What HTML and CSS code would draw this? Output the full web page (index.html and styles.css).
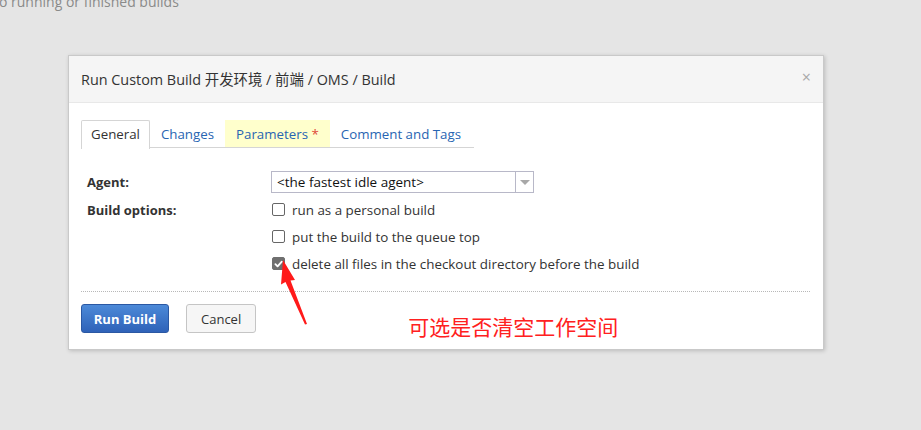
FILE: index.html
```html
<!DOCTYPE html>
<html>
<head>
<meta charset="utf-8">
<link rel="stylesheet" href="styles.css">
</head>
<body>
<div class="page">
  <div class="bgtext">o running or finished builds</div>
  <div class="dialog">
    <div class="dlg-head">
      <span class="dlg-title">Run Custom Build 开发环境 / 前端 / OMS / Build</span>
      <span class="close">×</span>
    </div>
    <div class="dlg-body">
      <div class="tabs">
        <div class="tab active">General</div>
        <div class="tab">Changes</div>
        <div class="tab params">Parameters <span class="star">*</span></div>
        <div class="tab">Comment and Tags</div>
      </div>
      <div class="form">
        <div class="label">Agent:</div>
        <div class="field">
          <div class="select"><span class="sel-text">&lt;the fastest idle agent&gt;</span><span class="sel-arrow"></span></div>
        </div>
        <div class="label">Build options:</div>
        <div class="field opts">
          <div class="opt"><span class="cb"></span>run as a personal build</div>
          <div class="opt"><span class="cb"></span>put the build to the queue top</div>
          <div class="opt"><span class="cb checked"><svg viewBox="0 0 12 12" width="12" height="12"><path d="M2.6 6.2 L5 8.6 L9.6 3.4" fill="none" stroke="#fff" stroke-width="2" stroke-linecap="round" stroke-linejoin="round"/></svg></span>delete all files in the checkout directory before the build</div>
        </div>
      </div>
      <div class="footer">
        <button class="btn primary">Run Build</button>
        <button class="btn">Cancel</button>
        <span class="note">可选是否清空工作空间</span>
      </div>
    </div>
    <svg class="arrow" width="40" height="70" viewBox="0 0 40 70"><path d="M14 0 L26 20 L21.5 20.5 L38 64 L36 64.5 L16.5 22 L12 24.5 Z" fill="#ff1a1a"/></svg>
  </div>
</div>
</body>
</html>
```
FILE: styles.css
```css
html, body { margin: 0; padding: 0; }
body {
  background: #e5e5e5;
  font-family: "Open Sans", "Noto Sans CJK SC", sans-serif;
  width: 921px; height: 430px; overflow: hidden;
}
.page { position: relative; height: 430px; }
.bgtext {
  position: absolute; top: -8px; left: -1px;
  font-size: 14px; color: #8a8a8a;
}
.dialog {
  position: absolute; left: 68px; top: 55px;
  width: 754px; height: 293px;
  background: #fff;
  border: 1px solid #c9c9c9;
  box-shadow: 1px 1px 4px rgba(0,0,0,0.18);
}
.dlg-head {
  height: 46px;
  background: #f5f5f5;
  border-bottom: 1px solid #e8e8e8;
  display: flex; align-items: center; justify-content: space-between;
  padding: 0 12px 0 12px;
}
.dlg-title { font-size: 14.4px; color: #333; margin-top: -2px; }
.close { font-size: 16px; color: #a8a8a8; margin-top: -4px; }
.dlg-body { padding: 17px 12px 0 12px; }
.tabs {
  display: flex; width: 393px;
  border-bottom: 1px solid #d5d5d5;
  height: 27px;
}
.tab {
  font-size: 13.3px; color: #2865b2;
  padding: 0 10px; line-height: 27px;
  border: 1px solid transparent; border-bottom: none;
}
.tab.active { color: #333; padding: 0 9px; border-color: #d5d5d5; background: #fff; height: 28px; border-radius: 2px 2px 0 0; }
.tab.params { background: #ffffcc; }
.star { color: #e0473a; }
.form {
  display: grid; grid-template-columns: 184px 1fr;
  padding: 25px 0 0 6px; row-gap: 8px;
}
.label { font-size: 13px; font-weight: bold; color: #333; }
.select {
  width: 261px; height: 20px;
  border: 1px solid #b8b8c8;
  display: flex; align-items: center;
  font-size: 13.5px; color: #111; margin-top: -2px;
}
.sel-text { flex: 1; padding-left: 5px; }
.sel-arrow {
  width: 17px; height: 20px; border-left: 1px solid #b8b8c8;
  position: relative;
}
.sel-arrow::after {
  content: ""; position: absolute; left: 4px; top: 8px;
  border-left: 5px solid transparent; border-right: 5px solid transparent;
  border-top: 5px solid #a8a8a8;
}
.opts { margin-top: -5px; }
.opt {
  display: flex; align-items: center;
  font-size: 13.4px; color: #333; height: 27px;
}
.cb {
  width: 11px; height: 11px; border: 1px solid #666; border-radius: 2px;
  margin-left: 1px; margin-right: 7px; flex: none; background: #fff;
  display: flex; align-items: center; justify-content: center;
}
.cb.checked { background: #6f6f6f; border-color: #6f6f6f; }
.footer {
  margin-top: 14px;
  border-top: 1px dotted #b8b8b8;
  padding-top: 12px;
  display: flex; align-items: flex-start;
  width: 729px;
}
.btn {
  font-family: "Open Sans", sans-serif;
  font-size: 13px; height: 29px;
  border: 1px solid #c5c5c5; border-radius: 3px;
  background: #f6f6f6; color: #333;
  padding: 0 14px;
  margin-right: 17px;
}
.btn.primary {
  background: linear-gradient(#4c8ad8, #2f62b8);
  border-color: #2b58a3; color: #fff; font-weight: bold;
  width: 88px; padding: 0;
}
.note {
  color: #ff2020; font-size: 21px; margin-left: 135px; margin-top: 10px;
  font-family: "Noto Sans CJK SC", sans-serif; line-height: 24px;
}
.arrow { position: absolute; left: 200px; top: 204px; }
```
